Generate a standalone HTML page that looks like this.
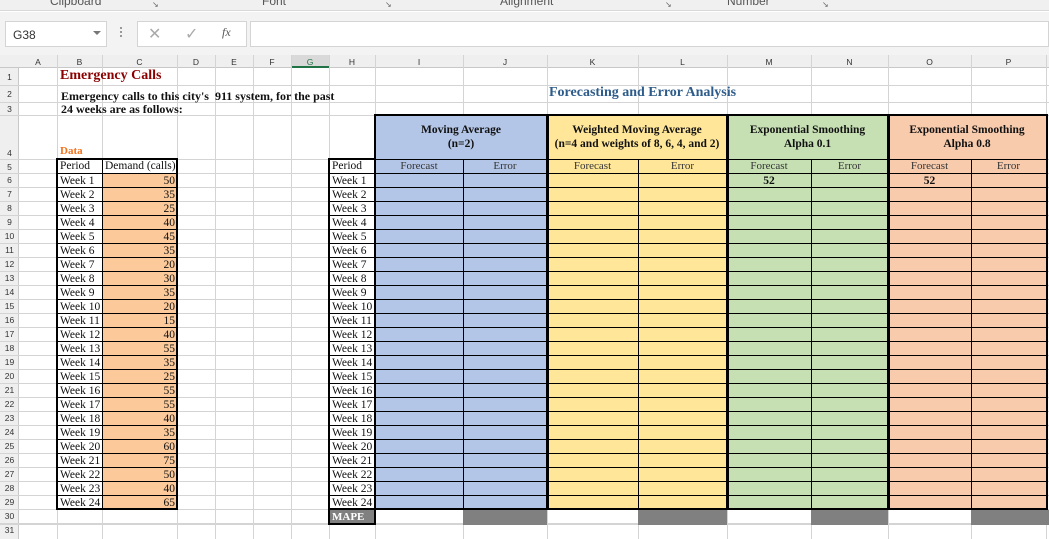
<!DOCTYPE html>
<html><head><meta charset="utf-8"><style>
*{margin:0;padding:0;box-sizing:border-box}
body{width:1049px;height:539px;overflow:hidden;background:#fff;position:relative;font-family:"Liberation Serif","DejaVu Serif",serif;color:#111}
.a{position:absolute}
.v{position:absolute;width:1px;background:#d4d4d4;top:55px;height:484px}
.h{position:absolute;height:1px;background:#d4d4d4;left:0;width:1049px}
.rh{position:absolute;left:0;width:19px;font:8.5px "Liberation Sans",sans-serif;color:#333;text-align:center}
.ch{position:absolute;top:55px;height:13px;font:8.5px "Liberation Sans",sans-serif;color:#333;text-align:center;line-height:14px}
.col div{height:14px;line-height:14px;font-size:11.5px;white-space:nowrap}
.blk{position:absolute;top:115px;height:394px;border:2px solid #000}
.sub{position:absolute;top:159px;height:14px;font-size:11px;line-height:14px;text-align:center;color:#333}
.hd{position:absolute;top:115px;height:44px;font-weight:bold;font-size:11.5px;text-align:center;display:flex;align-items:center;justify-content:center;line-height:14px}
.rows{position:absolute;background:repeating-linear-gradient(to bottom,#000 0 1px,transparent 1px 14px)}
</style></head><body>
<div class="a" style="left:0;top:0;width:1049px;height:11px;background:#f0f0f0;border-bottom:1px solid #d8d8d8"></div>
<div class="a" style="left:0;top:12px;width:1049px;height:43px;background:#f3f3f3"></div>
<div class="a" style="left:50px;top:-6px;font:12px 'Liberation Sans',sans-serif;color:#555">Clipboard</div>
<div class="a" style="left:262px;top:-6px;font:12px 'Liberation Sans',sans-serif;color:#555">Font</div>
<div class="a" style="left:500px;top:-6px;font:12px 'Liberation Sans',sans-serif;color:#555">Alignment</div>
<div class="a" style="left:727px;top:-6px;font:12px 'Liberation Sans',sans-serif;color:#555">Number</div>
<div class="a" style="left:152px;top:0;font:8px sans-serif;color:#666">↘</div>
<div class="a" style="left:385px;top:0;font:8px sans-serif;color:#666">↘</div>
<div class="a" style="left:665px;top:0;font:8px sans-serif;color:#666">↘</div>
<div class="a" style="left:822px;top:0;font:8px sans-serif;color:#666">↘</div>
<div class="a" style="left:5px;top:21px;width:102px;height:26px;background:#fff;border:1px solid #d4d4d4;font:12px 'Liberation Sans',sans-serif;color:#333;padding:6px 0 0 7px">G38</div>
<div class="a" style="left:93px;top:31px;width:0;height:0;border-left:4px solid transparent;border-right:4px solid transparent;border-top:4px solid #777"></div>
<div class="a" style="left:120px;top:27px;width:2px;height:12px;background:repeating-linear-gradient(#999 0 2px,transparent 2px 4px)"></div>
<div class="a" style="left:137px;top:21px;width:110px;height:26px;background:#fff;border:1px solid #d4d4d4"></div>
<div class="a" style="left:148px;top:24px;font:16px 'Liberation Sans',sans-serif;color:#aaa">✕</div>
<div class="a" style="left:185px;top:24px;font:16px 'Liberation Sans',sans-serif;color:#aaa">✓</div>
<div class="a" style="left:222px;top:25px;font:italic 12px 'Liberation Serif',serif;color:#555">fx</div>
<div class="a" style="left:250px;top:21px;width:799px;height:26px;background:#fff;border:1px solid #d4d4d4"></div>
<div class="a" style="left:0;top:55px;width:1049px;height:13px;background:#efefef;border-bottom:1px solid #c8c8c8"></div>
<div class="a" style="left:0;top:68px;width:19px;height:471px;background:#efefef;border-right:1px solid #c8c8c8"></div>
<div class="a" style="left:291px;top:55px;width:38px;height:13px;background:#d9d9d9;border-bottom:2px solid #217346"></div>
<div class="v" style="left:57px"></div><div class="v" style="left:102px"></div><div class="v" style="left:177px"></div><div class="v" style="left:215px"></div><div class="v" style="left:253px"></div><div class="v" style="left:291px"></div><div class="v" style="left:329px"></div><div class="v" style="left:375px"></div><div class="v" style="left:463px"></div><div class="v" style="left:547px"></div><div class="v" style="left:638px"></div><div class="v" style="left:727px"></div><div class="v" style="left:811px"></div><div class="v" style="left:888px"></div><div class="v" style="left:971px"></div><div class="v" style="left:1046px"></div>
<div class="h" style="top:85px"></div><div class="h" style="top:102px"></div><div class="h" style="top:115px"></div><div class="h" style="top:159px"></div>
<div class="a" style="left:0;top:173px;width:1049px;height:352px;background:repeating-linear-gradient(to bottom,#d4d4d4 0 1px,transparent 1px 14px)"></div>
<div class="h" style="top:524px"></div>
<div class="ch" style="left:19px;width:38px">A</div><div class="ch" style="left:57px;width:45px">B</div><div class="ch" style="left:102px;width:75px">C</div><div class="ch" style="left:177px;width:38px">D</div><div class="ch" style="left:215px;width:38px">E</div><div class="ch" style="left:253px;width:38px">F</div><div class="ch" style="left:291px;width:38px;color:#217346">G</div><div class="ch" style="left:329px;width:46px">H</div><div class="ch" style="left:375px;width:88px">I</div><div class="ch" style="left:463px;width:84px">J</div><div class="ch" style="left:547px;width:91px">K</div><div class="ch" style="left:638px;width:89px">L</div><div class="ch" style="left:727px;width:84px">M</div><div class="ch" style="left:811px;width:77px">N</div><div class="ch" style="left:888px;width:83px">O</div><div class="ch" style="left:971px;width:75px">P</div>
<div class="rh" style="top:72px">1</div><div class="rh" style="top:89px">2</div><div class="rh" style="top:104px">3</div><div class="rh" style="top:148px">4</div><div class="rh" style="top:162px">5</div>
<div class="rh" style="top:173px;line-height:14px">6<br>7<br>8<br>9<br>10<br>11<br>12<br>13<br>14<br>15<br>16<br>17<br>18<br>19<br>20<br>21<br>22<br>23<br>24<br>25<br>26<br>27<br>28<br>29<br>30<br>31</div>
<div class="a" style="left:60px;top:68px;font-weight:bold;font-size:14px;color:#8b0000">Emergency Calls</div>
<div class="a" style="left:61px;top:90px;font-weight:bold;font-size:12px;line-height:12.5px">Emergency calls to this city's&nbsp; 911 system, for the past<br>24 weeks are as follows:</div>
<div class="a" style="left:60px;top:145px;font-weight:bold;font-size:11px;color:#f4731f">Data</div>
<div class="a" style="left:549px;top:85px;font-weight:bold;font-size:14px;color:#2e5c8a">Forecasting and Error Analysis</div>
<div class="a" style="left:57px;top:159px;width:120px;height:351px;background:#fff"></div>
<div class="a" style="left:102px;top:173px;width:75px;height:337px;background:#fcc99a"></div>
<div class="rows" style="left:57px;top:173px;width:120px;height:337px"></div>
<div class="a" style="left:102px;top:159px;width:1px;height:350px;background:#000"></div>
<div class="a" style="left:56px;top:158px;width:122px;height:352px;border:2px solid #000"></div>
<div class="a" style="left:60px;top:159px;font-size:11.5px;line-height:14px">Period</div>
<div class="a" style="left:105px;top:159px;font-size:11.5px;line-height:14px">Demand (calls)</div>
<div class="a col" style="left:60px;top:174px"><div>Week 1</div><div>Week 2</div><div>Week 3</div><div>Week 4</div><div>Week 5</div><div>Week 6</div><div>Week 7</div><div>Week 8</div><div>Week 9</div><div>Week 10</div><div>Week 11</div><div>Week 12</div><div>Week 13</div><div>Week 14</div><div>Week 15</div><div>Week 16</div><div>Week 17</div><div>Week 18</div><div>Week 19</div><div>Week 20</div><div>Week 21</div><div>Week 22</div><div>Week 23</div><div>Week 24</div></div>
<div class="a col" style="left:120px;width:55px;top:174px;text-align:right"><div>50</div><div>35</div><div>25</div><div>40</div><div>45</div><div>35</div><div>20</div><div>30</div><div>35</div><div>20</div><div>15</div><div>40</div><div>55</div><div>35</div><div>25</div><div>55</div><div>55</div><div>40</div><div>35</div><div>60</div><div>75</div><div>50</div><div>40</div><div>65</div></div>
<div class="a" style="left:329px;top:159px;width:46px;height:366px;background:#fff"></div>
<div class="a" style="left:329px;top:509px;width:46px;height:16px;background:#808080"></div>
<div class="rows" style="left:329px;top:173px;width:46px;height:337px"></div>
<div class="a" style="left:328px;top:158px;width:48px;height:367px;border:2px solid #000"></div>
<div class="a" style="left:328px;top:508px;width:48px;height:2px;background:#000"></div>
<div class="a" style="left:332px;top:159px;font-size:11.5px;line-height:14px">Period</div>
<div class="a col" style="left:332px;top:174px"><div>Week 1</div><div>Week 2</div><div>Week 3</div><div>Week 4</div><div>Week 5</div><div>Week 6</div><div>Week 7</div><div>Week 8</div><div>Week 9</div><div>Week 10</div><div>Week 11</div><div>Week 12</div><div>Week 13</div><div>Week 14</div><div>Week 15</div><div>Week 16</div><div>Week 17</div><div>Week 18</div><div>Week 19</div><div>Week 20</div><div>Week 21</div><div>Week 22</div><div>Week 23</div><div>Week 24</div></div>
<div class="a" style="left:332px;top:510px;font-size:11px;font-weight:bold;color:#fff;line-height:14px">MAPE</div>
<div class="a" style="left:375px;top:115px;width:172px;height:395px;background:#b4c6e7"></div>
<div class="a" style="left:547px;top:115px;width:180px;height:395px;background:#ffe699"></div>
<div class="a" style="left:727px;top:115px;width:161px;height:395px;background:#c6e0b4"></div>
<div class="a" style="left:888px;top:115px;width:158px;height:395px;background:#f8cbad"></div>
<div class="rows" style="left:375px;top:159px;width:671px;height:351px"></div>
<div class="a" style="left:463px;top:159px;width:1px;height:350px;background:#000"></div>
<div class="a" style="left:638px;top:159px;width:1px;height:350px;background:#000"></div>
<div class="a" style="left:811px;top:159px;width:1px;height:350px;background:#000"></div>
<div class="a" style="left:971px;top:159px;width:1px;height:350px;background:#000"></div>
<div class="blk" style="left:374px;width:175px;height:396px;top:114px"></div>
<div class="blk" style="left:546px;width:183px;height:396px;top:114px"></div>
<div class="blk" style="left:726px;width:164px;height:396px;top:114px"></div>
<div class="blk" style="left:887px;width:161px;height:396px;top:114px"></div>
<div class="a" style="left:463px;top:510px;width:84px;height:15px;background:#808080"></div>
<div class="a" style="left:638px;top:510px;width:89px;height:15px;background:#808080"></div>
<div class="a" style="left:811px;top:510px;width:77px;height:15px;background:#808080"></div>
<div class="a" style="left:971px;top:510px;width:78px;height:15px;background:#808080"></div>
<div class="hd" style="left:375px;width:172px">Moving Average<br>(n=2)</div>
<div class="hd" style="left:547px;width:180px">Weighted Moving Average<br>(n=4 and weights of 8, 6, 4, and 2)</div>
<div class="hd" style="left:727px;width:161px">Exponential Smoothing<br>Alpha 0.1</div>
<div class="hd" style="left:888px;width:158px">Exponential Smoothing<br>Alpha 0.8</div>
<div class="sub" style="left:375px;width:88px">Forecast</div><div class="sub" style="left:463px;width:84px">Error</div>
<div class="sub" style="left:547px;width:91px">Forecast</div><div class="sub" style="left:638px;width:89px">Error</div>
<div class="sub" style="left:727px;width:84px">Forecast</div><div class="sub" style="left:811px;width:77px">Error</div>
<div class="sub" style="left:888px;width:83px">Forecast</div><div class="sub" style="left:971px;width:75px">Error</div>
<div class="a" style="left:727px;width:84px;top:174px;text-align:center;font-weight:bold;font-size:11.5px;line-height:14px">52</div>
<div class="a" style="left:888px;width:83px;top:174px;text-align:center;font-weight:bold;font-size:11.5px;line-height:14px">52</div>
</body></html>
